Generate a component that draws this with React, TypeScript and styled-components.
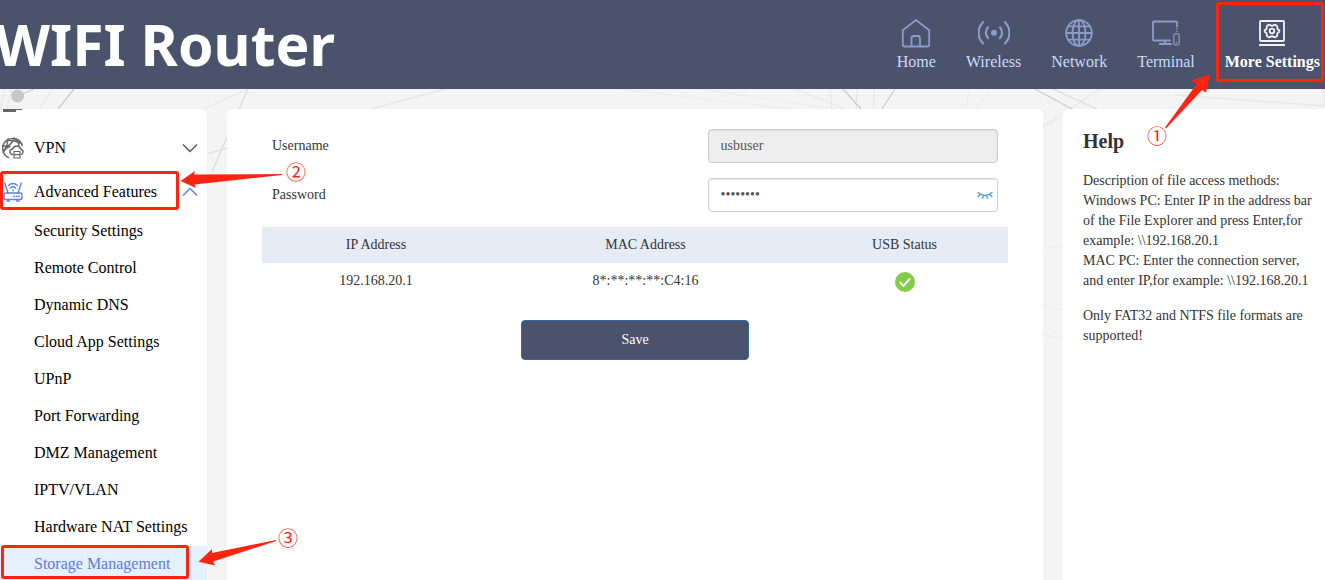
import React, { useState } from "react";
import styled, { createGlobalStyle } from "styled-components";

const navy = "#4b526b";
const red = "#ff2312";
const serif = '"Liberation Serif", "Times New Roman", serif';

const GlobalStyle = createGlobalStyle`
  *, *::before, *::after { box-sizing: border-box; }
  body { margin: 0; background: #f4f4f4; font-family: ${serif}; font-size: 14px; line-height: 20px; color: #333; }
  ul { list-style: none; margin: 0; padding: 0; }
  a { color: inherit; text-decoration: none; }
  button, input { font: inherit; color: inherit; }
`;

const Shell = styled.div`
  position: relative;
  isolation: isolate;
  display: flex;
  flex-direction: column;
  height: 100vh;
  overflow: hidden;
`;

const Backdrop = styled.svg`
  position: absolute;
  top: 0;
  left: 0;
  z-index: -1;
  fill: none;
  stroke: #e8e8e8;
  stroke-width: 1.3;
`;

const Header = styled.header`
  display: flex;
  flex: none;
  justify-content: space-between;
  height: 89px;
  background: ${navy};
`;

const Brand = styled.h1`
  margin: 0 0 0 -5px;
  font: 700 57px/88px "Noto Sans", "Open Sans", sans-serif;
  color: #fff;
  white-space: nowrap;
`;

const NavList = styled.ul`
  display: flex;
  gap: 30px;
  padding: 17px 5px 0 0;
`;

const NavLink = styled.a<{ $active?: boolean }>`
  display: flex;
  flex-direction: column;
  align-items: center;
  gap: 3px;
  font-size: 16px;
  line-height: 20px;
  font-weight: ${(p) => (p.$active ? 700 : 400)};
  color: ${(p) => (p.$active ? "#fff" : "#cbdcfa")};
  white-space: nowrap;

  svg {
    width: 32px;
    height: 32px;
    fill: none;
    stroke: ${(p) => (p.$active ? "#f0f2f8" : "#8a9cca")};
    stroke-width: 1.8;
    stroke-linecap: round;
    stroke-linejoin: round;
  }
`;

const Content = styled.div`
  display: flex;
  flex: 1;
  gap: 20px;
  min-height: 0;
  padding-top: 20px;
`;

const Sidebar = styled.nav`
  flex: none;
  width: 207px;
  overflow: hidden;
  background: #fff;
  border-radius: 0 6px 0 0;
  font-size: 16px;
  color: #000;
`;

const PreviousIcon = styled.svg`
  display: block;
  width: 24px;
  height: 16px;
  fill: #666;
`;

const MenuToggle = styled.button`
  display: flex;
  align-items: center;
  gap: 10px;
  width: 100%;
  height: 44px;
  padding: 2px 9px 0 0;
  border: 0;
  background: none;
  text-align: left;
  cursor: pointer;
`;

const MenuIcon = styled.svg<{ $open?: boolean }>`
  flex: none;
  width: 24px;
  height: 24px;
  fill: none;
  stroke: ${(p) => (p.$open ? "#5f80dd" : "#666")};
  stroke-width: 1.4;
  stroke-linecap: round;
  stroke-linejoin: round;
`;

const MenuLabel = styled.span`
  flex: 1;
`;

const Chevron = styled.svg<{ $open?: boolean }>`
  width: 16px;
  height: 10px;
  fill: none;
  stroke: ${(p) => (p.$open ? "#5f80dd" : "#555")};
  stroke-width: 1.4;
  transform: ${(p) => (p.$open ? "rotate(180deg)" : "none")};
`;

const SubLink = styled.a<{ $active?: boolean }>`
  display: block;
  height: 37px;
  padding-left: 34px;
  line-height: 35px;
  color: ${(p) => (p.$active ? "#5f7bdc" : "#000")};
  background: ${(p) => (p.$active ? "#e4f0fb" : "transparent")};
`;

const Panel = styled.main`
  flex: 1;
  min-width: 0;
  padding: 20px 35px;
  background: #fff;
  border-radius: 6px 6px 0 0;
`;

const Field = styled.div`
  display: flex;
  justify-content: space-between;
  margin-bottom: 15px;
  padding: 0 10px;

  label {
    line-height: 34px;
  }
`;

const InputWrap = styled.div`
  position: relative;
  width: 40%;
`;

const TextInput = styled.input`
  display: block;
  width: 100%;
  height: 34px;
  padding: 6px 12px;
  border: 1px solid #ccc;
  border-radius: 4px;
  background: #fff;
  box-shadow: inset 0 1px 1px rgba(0, 0, 0, 0.08);
  color: #555;
  outline: none;

  &:disabled {
    background: #eee;
  }
`;

const RevealButton = styled.button`
  position: absolute;
  top: 8px;
  right: 4px;
  display: flex;
  padding: 0;
  border: 0;
  background: none;
  cursor: pointer;

  svg {
    width: 18px;
    height: 18px;
    fill: none;
    stroke: #4fa3e0;
    stroke-width: 1.4;
    stroke-linecap: round;
  }
`;

const DeviceTable = styled.table`
  width: 100%;
  border-collapse: collapse;
  table-layout: fixed;
  text-align: center;

  th {
    height: 36px;
    padding: 0;
    font-weight: 400;
    background: #e5ecf6;
  }

  td {
    height: 37px;
    padding: 0 0 2px;
  }
`;

const StatusIcon = styled.svg`
  display: block;
  width: 20px;
  height: 20px;
  margin: 3px auto 0;
`;

const SaveButton = styled.button`
  display: block;
  width: 228px;
  height: 40px;
  margin: 20px auto 0;
  padding: 0;
  border: 1px solid #3468a8;
  border-radius: 4px;
  background: ${navy};
  color: #fff;
  cursor: pointer;
`;

const HelpPanel = styled.aside`
  flex: none;
  width: 262px;
  padding: 20px 8px 20px 20px;
  background: #fff;
  border-radius: 6px 0 0 0;

  h2 {
    margin: 0 0 18px;
    font-size: 20px;
    line-height: 24px;
  }

  p {
    margin: 0 0 15px;
  }
`;

const Callout = styled.div<{ $side: "left" | "right"; $top: number; $inset: number; $width: number; $height: number }>`
  position: absolute;
  ${(p) => p.$side}: ${(p) => p.$inset}px;
  top: ${(p) => p.$top}px;
  width: ${(p) => p.$width}px;
  height: ${(p) => p.$height}px;
  border: 3px solid ${red};
  border-radius: 3px;
  pointer-events: none;
`;

const ArrowLayer = styled.svg<{ $side: "left" | "right" }>`
  position: absolute;
  top: 0;
  ${(p) => p.$side}: 0;
  width: 325px;
  height: 580px;
  fill: ${red};
  pointer-events: none;

  text {
    font: 20px "Noto Sans CJK SC", sans-serif;
    text-anchor: middle;
  }
`;

const navItems = [
  {
    label: "Home",
    icon: (
      <path d="M2.8 13.2 16 3l13.2 10.2v14.3q0 2-2 2H4.8q-2 0-2-2ZM11.500 29v-7.500q0-2.500 2.500-2.500h3.500q2.500 0 2.500 2.500V29" />
    ),
  },
  {
    label: "Wireless",
    icon: (
      <>
        <circle cx="16" cy="15.700" r="3" fill="#8a9cca" stroke="none" />
        <path
          strokeWidth="2.200"
          d="M10 10.300a8 8 0 0 0 0 10.800M22 10.300a8 8 0 0 1 0 10.800M5 5.200a15 15 0 0 0 0 21.300M27 5.200a15 15 0 0 1 0 21.300"
        />
      </>
    ),
  },
  {
    label: "Network",
    icon: (
      <>
        <circle cx="16" cy="16" r="12.800" />
        <ellipse cx="16" cy="16" rx="6.500" ry="12.800" />
        <path d="M16 3.200v25.600M3.200 16h25.600M5.200 9.300h21.600M5.200 22.700h21.600" />
      </>
    ),
  },
  {
    label: "Terminal",
    icon: (
      <>
        <path d="M27 9.500V5.500q0-1-1-1H4q-1 0-1 1V22.500q0 1 1 1h16M15 23.500v3.500M9.500 27H21" />
        <rect x="23.800" y="16.800" width="5.400" height="11" rx="1.200" strokeWidth="1.200" />
        <path strokeWidth="1.400" d="M26.800 11.800v.1M26.800 14.500v.1M26.200 25.800h.6" />
      </>
    ),
  },
  {
    label: "More Settings",
    active: true,
    icon: (
      <>
        <rect x="4" y="4" width="24" height="20" rx="1" />
        <path d="M3 28h26" strokeLinecap="butt" strokeWidth="2" />
        <path d="M12.800 7.800q.6-.3 1.200.2 2 1.500 4 0 .6-.5 1.200-.2l1.600 1q.5.4.4 1.200-.2 2.200 1.600 2.900.6.300.6 1.100t-.6 1.100q-1.800.7-1.600 2.900.1.800-.4 1.200l-1.600 1q-.6.300-1.200-.2-2-1.500-4 0-.6.5-1.200.2l-1.600-1q-.5-.4-.4-1.200.2-2.200-1.600-2.900-.6-.3-.6-1.100t.6-1.100q1.800-.7 1.600-2.900-.1-.8.4-1.200Z" />
        <circle cx="16" cy="14" r="2.300" />
      </>
    ),
  },
];

const subItems = [
  "Security Settings",
  "Remote Control",
  "Dynamic DNS",
  "Cloud App Settings",
  "UPnP",
  "Port Forwarding",
  "DMZ Management",
  "IPTV/VLAN",
  "Hardware NAT Settings",
  "Storage Management",
];

function NetworkBackdrop() {
  return (
    <Backdrop width="1325" height="580" aria-hidden="true">
      <path d="M5 89 0 109M11 89 7 109M52 89 40 109M248 89 203 109M445 89 371 109M795 89 845 109M830 89 832 109M857 89 856 109M874 89V109M1100 89 1030 135M1175 95 1325 106M1323 89 1325 105" />
      <path stroke="#dcdcdc" d="M248 89 239 109 212 172M207 154 227 148M1053 89 1097 109" />
      <path stroke="#cccccc" d="M20 95 34 89M74 89 58 109M843 89 861 109M895 89 882 109M1035 89 1072 109" />
      <path stroke="#eeeeee" d="M620 89 790 109M700 89 835 109M970 89 965 109M990 89 976 109M1043 128 1063 117M1043 248 1063 246M1043 305 1063 310M1043 335 1063 338" />
      <circle cx="17.500" cy="96" r="6.500" fill="#c8c8c8" stroke="none" />
    </Backdrop>
  );
}

function ChevronIcon({ open }: { open?: boolean }) {
  return (
    <Chevron $open={open} viewBox="0 0 16 10" aria-hidden="true">
      <path d="m1 1.500 7 7 7-7" />
    </Chevron>
  );
}

export default function App() {
  const [password, setPassword] = useState("usb12345");
  const [visible, setVisible] = useState(false);

  return (
    <Shell>
      <GlobalStyle />
      <NetworkBackdrop />

      <Header>
        <Brand>WIFI Router</Brand>
        <nav aria-label="Main">
          <NavList>
            {navItems.map((item) => (
              <li key={item.label}>
                <NavLink href="#" $active={item.active}>
                  <svg viewBox="0 0 32 32" aria-hidden="true">
                    {item.icon}
                  </svg>
                  {item.label}
                </NavLink>
              </li>
            ))}
          </NavList>
        </nav>
      </Header>

      <Content>
        <Sidebar aria-label="Settings">
          <PreviousIcon viewBox="0 0 24 16" aria-hidden="true">
            <path d="M3 0h19v1h-6v2H3Z" />
          </PreviousIcon>
          <MenuToggle type="button">
            <MenuIcon viewBox="0 0 24 24" aria-hidden="true">
              <path d="M8.500 21.500A10 10 0 1 1 22.200 9.500M3 9.500q7 3 11-7.500M7 4q8 .5 13.500 3M3 15q4-3 5-12M3.500 16.500q2-5 6.500-6M14.500 2.500q4 3 4.500 7" />
              <path d="M12.500 18.500q-2.500-.5-2.500-2.800 0-2.500 2.700-2.700 1-3 4-3 3.200 0 4 3.200 2.500.5 2.300 2.800-.2 2-1.500 2.300" />
              <path d="M14 15.500h6v6.500h-6ZM14 18.700h6" strokeWidth="1.200" />
            </MenuIcon>
            <MenuLabel>VPN</MenuLabel>
            <ChevronIcon />
          </MenuToggle>
          <MenuToggle type="button" aria-expanded="true">
            <MenuIcon $open viewBox="0 0 24 24" aria-hidden="true">
              <rect x="4" y="13" width="18" height="6.500" rx="1.500" />
              <path d="M8 13 4.700 3M18 13 21.300 3M8.500 5.500q4.500-4 9 0M10.300 8q2.700-2.300 5.400 0M7 21h2.500M16.500 21H19" />
              <path d="M13 10.300v.2M14 16.300h.2M16.500 16.300h.2M19 16.300h.2" strokeWidth="1.800" />
            </MenuIcon>
            <MenuLabel>Advanced Features</MenuLabel>
            <ChevronIcon open />
          </MenuToggle>
          <ul>
            {subItems.map((label) => (
              <li key={label}>
                <SubLink href="#" $active={label === "Storage Management"}>
                  {label}
                </SubLink>
              </li>
            ))}
          </ul>
        </Sidebar>

        <Panel>
          <Field>
            <label htmlFor="username">Username</label>
            <InputWrap>
              <TextInput id="username" value="usbuser" disabled readOnly />
            </InputWrap>
          </Field>
          <Field>
            <label htmlFor="password">Password</label>
            <InputWrap>
              <TextInput
                id="password"
                type={visible ? "text" : "password"}
                value={password}
                onChange={(e) => setPassword(e.target.value)}
              />
              <RevealButton type="button" aria-label="Show password" onClick={() => setVisible(!visible)}>
                <svg viewBox="0 0 18 18" aria-hidden="true">
                  <path d="M2 6.500q7 6 14 0M4.200 8.500 2.200 10.500M13.800 8.500l2 2M7.300 10l-.8 2.300M10.700 10l.8 2.300" />
                </svg>
              </RevealButton>
            </InputWrap>
          </Field>

          <DeviceTable>
            <colgroup>
              <col width="228" />
              <col width="311" />
              <col width="207" />
            </colgroup>
            <thead>
              <tr>
                <th scope="col">IP Address</th>
                <th scope="col">MAC Address</th>
                <th scope="col">USB Status</th>
              </tr>
            </thead>
            <tbody>
              <tr>
                <td>192.168.20.1</td>
                <td>8*:**:**:**:C4:16</td>
                <td>
                  <StatusIcon viewBox="0 0 20 20" role="img" aria-label="Connected">
                    <circle cx="10" cy="10" r="10" fill="#84cb4b" />
                    <path d="m4.800 10.200 3.700 3.700 6.700-7.500" fill="none" stroke="#fff" strokeWidth="1.900" />
                  </StatusIcon>
                </td>
              </tr>
            </tbody>
          </DeviceTable>

          <SaveButton type="button">Save</SaveButton>
        </Panel>

        <HelpPanel>
          <h2>Help</h2>
          <p>
            Description of file access methods:
            <br />
            Windows PC: Enter IP in the address bar of the File Explorer and press Enter,for example:
            {" \\\\192.168.20.1"}
            <br />
            MAC PC: Enter the connection server, and enter IP,for example: {"\\\\192.168.20.1"}
          </p>
          <p>Only FAT32 and NTFS file formats are supported!</p>
        </HelpPanel>
      </Content>

      <Callout $side="right" $inset={1} $top={2} $width={108} $height={80} />
      <Callout $side="left" $inset={0} $top={171} $width={179} $height={39} />
      <Callout $side="left" $inset={1} $top={545} $width={188} $height={34} />
      <ArrowLayer $side="right" viewBox="0 0 325 580">
        <path d="M210 74.500 191 80.500l6 3L165 127.500l1 1L202 90l4 2.500Z" />
        <text x="157" y="144">①</text>
      </ArrowLayer>
      <ArrowLayer $side="left" viewBox="0 0 325 580">
        <path d="M180.500 181 195 171l-1 3.500 88-.5v1L194.500 184.500l1.500 3.500Z" />
        <text x="296" y="180">②</text>
        <path d="M198.500 561.700 212 549v4l64-13v1L213 561.500l2 4Z" />
        <text x="288" y="546">③</text>
      </ArrowLayer>
    </Shell>
  );
}
